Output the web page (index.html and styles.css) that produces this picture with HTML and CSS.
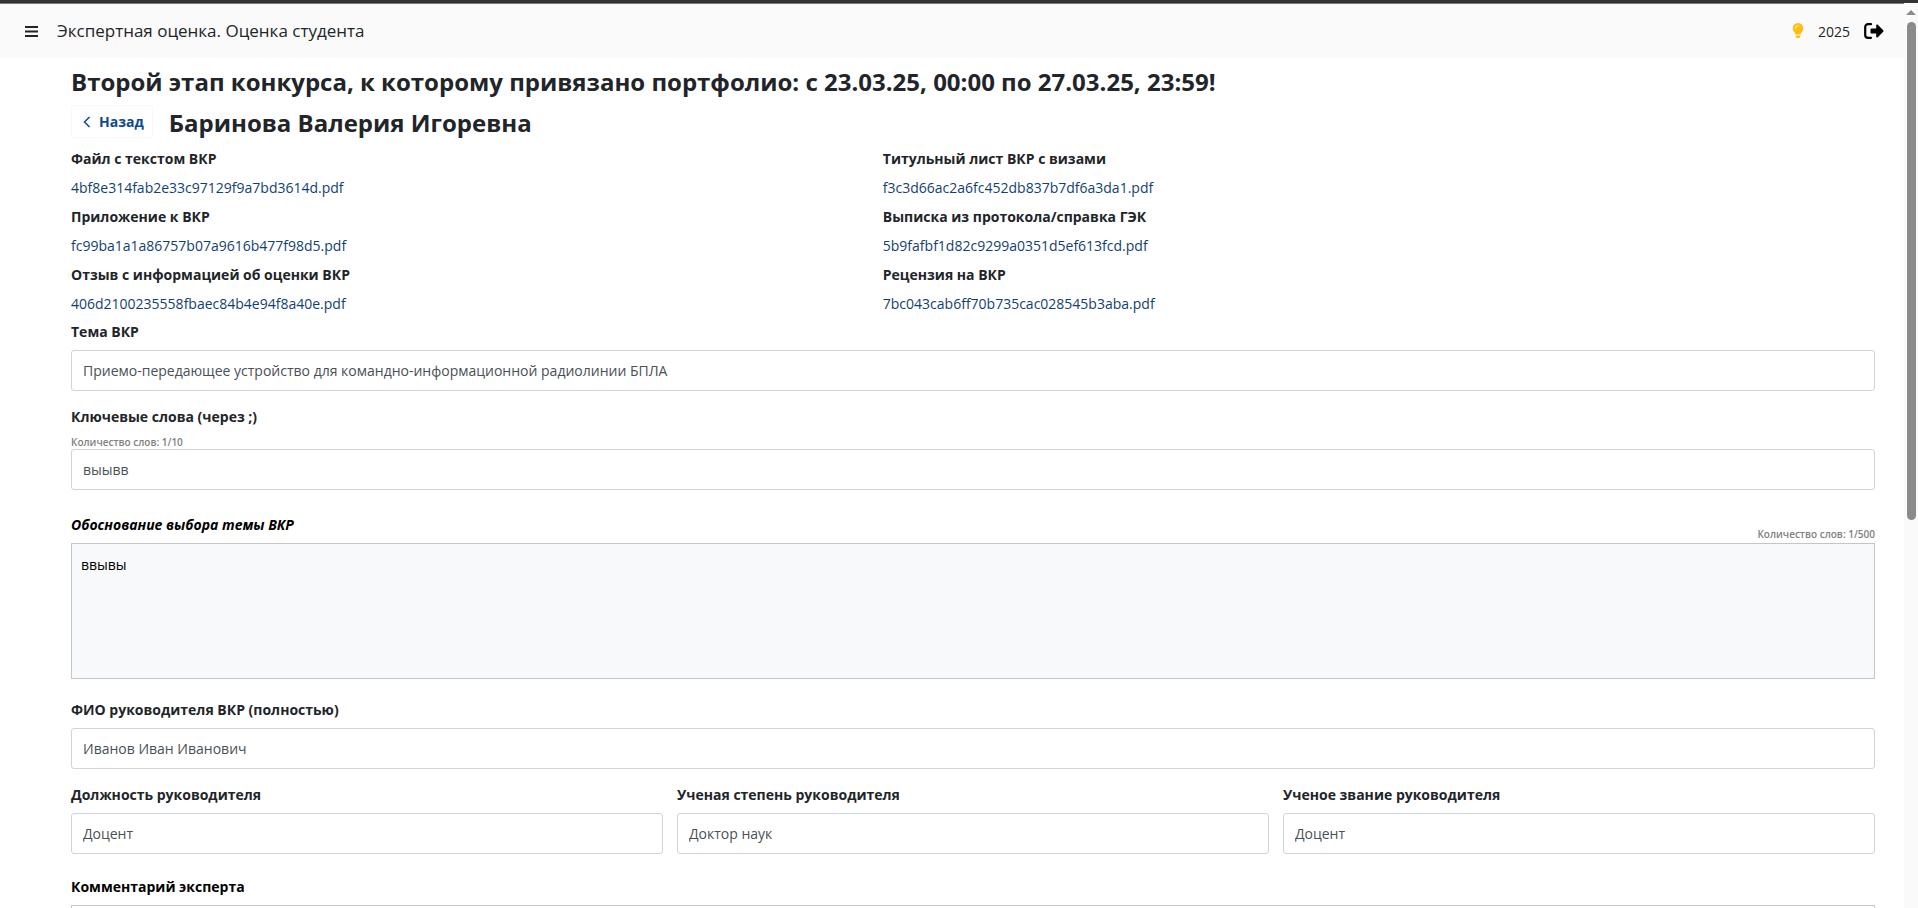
FILE: index.html
```
<!DOCTYPE html>
<html lang="ru">
<head>
    <meta charset="UTF-8">
    <meta name="viewport" content="width=device-width, initial-scale=1.0">
    <title>Экспертная оценка. Оценка студента</title>
    <link rel="stylesheet" href="styles.css">
</head>
<body>
    <div class="app">
        <div class="page">
            <header class="topbar">
                <button type="button" class="icon-btn menu-btn" aria-label="Меню">
                    <svg width="13" height="13" viewBox="0 0 13 13"><path d="M0 2h13M0 6.500h13M0 11h13" stroke="#212529" stroke-width="2"/></svg>
                </button>
                <span class="topbar-title">Экспертная оценка. Оценка студента</span>
                <div class="topbar-right">
                    <svg class="bulb" width="12" height="16" viewBox="0 0 12 16"><path d="M6 0a5.3 5.3 0 0 0-5.3 5.3c0 1.400.500 2.600 1.300 3.500.8 1 1.200 1.700 1.400 2.700h5.200c.2-1 .6-1.700 1.400-2.700.8-.9 1.300-2.100 1.300-3.500A5.300 5.300 0 0 0 6 0z" fill="#fdbe0f"/><path d="M3.200 5.500A2.800 2.800 0 0 1 6 2.700" fill="none" stroke="#fff" stroke-width=".8" stroke-linecap="round"/><path d="M3.700 12.600h4.600v.9L7.300 15H4.700l-1-1.500z" fill="#fdbe0f"/></svg>
                    <span class="year">2025</span>
                    <button type="button" class="icon-btn" aria-label="Выход">
                        <svg width="20" height="16" viewBox="0 0 20 16"><path d="M7 1.200H4A2.800 2.800 0 0 0 1.200 4v8A2.800 2.800 0 0 0 4 14.800h3" fill="none" stroke="#000" stroke-width="2.200" stroke-linecap="round"/><path d="M12.200 2.500c0-.9 1-1.300 1.600-.7l5.400 5.400c.5.500.5 1.100 0 1.600l-5.400 5.400c-.6.600-1.600.200-1.600-.7V10.600H7.500a1 1 0 0 1-1-1V6.400a1 1 0 0 1 1-1h4.700z" fill="#000"/></svg>
                    </button>
                </div>
            </header>
            <main class="content">
                <h1>Второй этап конкурса, к которому привязано портфолио: с 23.03.25, 00:00 по 27.03.25, 23:59!</h1>
                <div class="student">
                    <button type="button" class="back-btn">
                        <svg width="8" height="12" viewBox="0 0 8 12"><path d="M6.500 1 1.500 6l5 5" fill="none" stroke="#0b4a8f" stroke-width="1.500"/></svg>
                        Назад
                    </button>
                    <h2>Баринова Валерия Игоревна</h2>
                </div>
                <div class="files">
                    <div class="file"><b>Файл с текстом ВКР</b><a href="#">4bf8e314fab2e33c97129f9a7bd3614d.pdf</a></div>
                    <div class="file"><b>Титульный лист ВКР с визами</b><a href="#">f3c3d66ac2a6fc452db837b7df6a3da1.pdf</a></div>
                    <div class="file"><b>Приложение к ВКР</b><a href="#">fc99ba1a1a86757b07a9616b477f98d5.pdf</a></div>
                    <div class="file"><b>Выписка из протокола/справка ГЭК</b><a href="#">5b9fafbf1d82c9299a0351d5ef613fcd.pdf</a></div>
                    <div class="file"><b>Отзыв с информацией об оценки ВКР</b><a href="#">406d2100235558fbaec84b4e94f8a40e.pdf</a></div>
                    <div class="file"><b>Рецензия на ВКР</b><a href="#">7bc043cab6ff70b735cac028545b3aba.pdf</a></div>
                </div>
                <form>
                    <div class="field">
                        <label for="topic">Тема ВКР</label>
                        <input type="text" id="topic" value="Приемо-передающее устройство для командно-информационной радиолинии БПЛА" readonly>
                    </div>
                    <div class="field keywords">
                        <label for="keywords">Ключевые слова (через ;)</label>
                        <span class="counter">Количество слов: 1/10</span>
                        <input type="text" id="keywords" value="выывв" readonly>
                    </div>
                    <div class="field reason">
                        <div class="field-head">
                            <label for="reason">Обоснование выбора темы ВКР</label>
                            <span class="counter">Количество слов: 1/500</span>
                        </div>
                        <textarea id="reason" readonly>ввывы</textarea>
                    </div>
                    <div class="field">
                        <label for="head">ФИО руководителя ВКР (полностью)</label>
                        <input type="text" id="head" value="Иванов Иван Иванович" readonly>
                    </div>
                    <div class="row">
                        <div class="field">
                            <label for="position">Должность руководителя</label>
                            <input type="text" id="position" value="Доцент" readonly>
                        </div>
                        <div class="field">
                            <label for="degree">Ученая степень руководителя</label>
                            <input type="text" id="degree" value="Доктор наук" readonly>
                        </div>
                        <div class="field">
                            <label for="rank">Ученое звание руководителя</label>
                            <input type="text" id="rank" value="Доцент" readonly>
                        </div>
                    </div>
                    <div class="field comment">
                        <label for="comment">Комментарий эксперта</label>
                        <textarea id="comment"></textarea>
                    </div>
                </form>
            </main>
        </div>
        <div class="scrollbar" aria-hidden="true">
            <div class="scroll-arrow"></div>
            <div class="scroll-thumb"></div>
        </div>
    </div>
</body>
</html>
```
FILE: styles.css
```
* { box-sizing: border-box; }
body {
    margin: 0;
    font-family: "Open Sans", "Noto Sans", sans-serif;
    font-size: 14px;
    line-height: 21px;
    color: #212529;
    background-color: #fff;
}
.app {
    display: flex;
    height: 100vh;
    border-top: 3px solid #333;
}
.page {
    flex: 1;
    min-width: 0;
    overflow-y: auto;
    scrollbar-width: none;
}

/* header */
.topbar {
    display: flex;
    align-items: center;
    height: 55px;
    padding: 0 20px 0 25px;
    background-color: #fafafa;
    border-top: 1px solid #777;
}
.icon-btn {
    display: flex;
    padding: 0;
    border: 0;
    background: none;
    cursor: pointer;
}
.topbar-title {
    margin-left: 19px;
    font-size: 17px;
    line-height: 24px;
}
.topbar-right {
    display: flex;
    align-items: center;
    gap: 14px;
    margin-left: auto;
}

/* content */
.content { padding: 6px 29px 24px 71px; }
h1, h2 {
    margin: 0;
    font-size: 24px;
    line-height: 36px;
    font-weight: 700;
}
.student {
    display: flex;
    align-items: flex-start;
    gap: 16px;
    height: 48px;
    padding-top: 5px;
}
.back-btn {
    display: flex;
    align-items: center;
    gap: 8px;
    height: 33px;
    padding: 0 8px 0 11px;
    border: 1px solid #f8f9fa;
    border-radius: 3px;
    background-color: #fff;
    color: #0b4a8f;
    font: inherit;
    font-weight: 700;
    cursor: pointer;
}
.files {
    display: grid;
    grid-template-columns: 45% 45%;
    row-gap: 8px;
    margin-bottom: 7px;
}
.file {
    display: flex;
    flex-direction: column;
    align-items: flex-start;
    gap: 8px;
}
a { color: #123f73; text-decoration: none; }

/* form */
.field { display: flex; flex-direction: column; margin-bottom: 15px; }
label { margin-bottom: 8px; font-weight: 700; }
input, textarea {
    width: 100%;
    border: 1px solid #ced4da;
    font: inherit;
    outline: none;
}
input {
    height: 41px;
    padding: 0 11px;
    border-radius: 3px;
    color: #495057;
    background-color: #fff;
}
textarea {
    display: block;
    height: 136px;
    padding: 10px 9px;
    border-color: #c3c6c9;
    resize: none;
    color: #000;
    background-color: #f8f9fb;
}
.counter {
    font-size: 10px;
    line-height: 14px;
    font-weight: 600;
    color: #808080;
}
.keywords { margin-bottom: 24px; }
.field-head {
    display: flex;
    justify-content: space-between;
    align-items: flex-end;
}
.field-head .counter { margin-bottom: 2px; }
.reason { margin-bottom: 20px; }
.reason label { font-style: italic; color: #000; }
.row {
    display: grid;
    grid-template-columns: repeat(3, 1fr);
    gap: 14px;
}
.comment { margin-top: 7px; }
.comment label { color: #000; }
.comment textarea { background-color: #fff; }

.scrollbar {
    display: flex;
    flex-direction: column;
    align-items: center;
    gap: 7px;
    width: 14px;
    padding-top: 7px;
    background-color: #fafafa;
}
.scroll-arrow {
    border: 5px solid transparent;
    border-top: 0;
    border-bottom-color: #8b8b8b;
}
.scroll-thumb {
    width: 9px;
    height: calc(55% + 4px);
    border-radius: 5px;
    background-color: #8b8b8b;
}
```
